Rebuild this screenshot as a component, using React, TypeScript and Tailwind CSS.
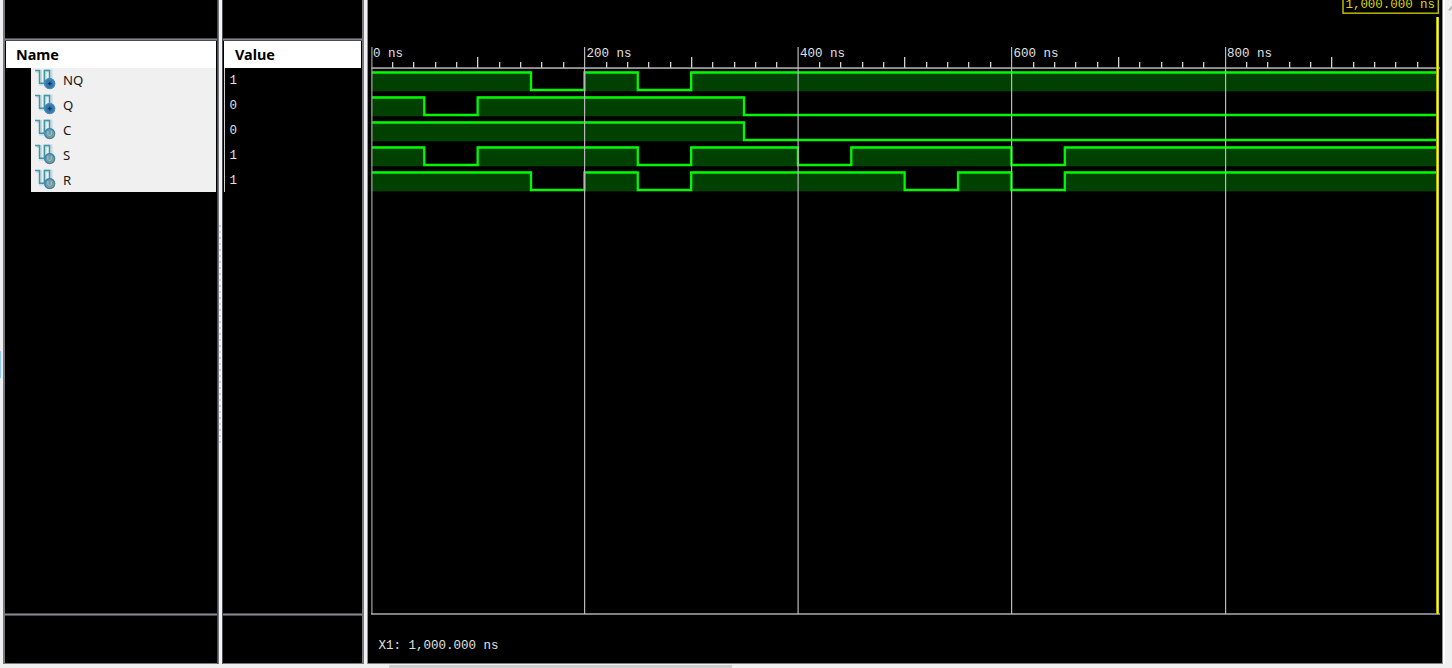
const PX_PER_NS = 1.0675;
const X0 = 370.9;
const x = (ns: number) => X0 + ns * PX_PER_NS;

type Signal = { name: string; value: string; output?: boolean; edges: number[] };

// Every signal starts high and toggles at each listed time (ns).
const signals: Signal[] = [
  { name: 'NQ', value: '1', output: true, edges: [150, 200, 250, 300] },
  { name: 'Q', value: '0', output: true, edges: [50, 100, 349.5] },
  { name: 'C', value: '0', edges: [349.5] },
  { name: 'S', value: '1', edges: [50, 100, 250, 300, 400, 450, 600, 650] },
  { name: 'R', value: '1', edges: [150, 200, 250, 300, 500, 550, 600, 650] },
];

function SignalIcon({ output }: { output?: boolean }) {
  return (
    <svg width="22" height="23" viewBox="0 0 22 23" className="shrink-0">
      <path d="M1.5 2.5h4V15h4.5V2h6v9" fill="none" stroke="#a9cfe2" strokeWidth="3" opacity=".6" />
      <path d="M0 1.6h4.5v12.7H9.4V1.6h5.1v9" fill="none" stroke="#3f98a3" strokeWidth="1.5" />
      <circle cx="14.7" cy="14.6" r="5.6" fill={output ? '#3477ad' : '#6a9cae'} />
      <circle cx="14.7" cy="14.6" r="4.9" fill="none" stroke={output ? '#4a8cc0' : '#3b80b4'} strokeWidth="1.2" />
      {output ? (
        <path d="M12.9 14.6h3.8M14.8 12.7v3.8" stroke="#12365e" strokeWidth="1.3" />
      ) : (
        <g fill="none">
          <path d="M15.2 18.1c2-.5 3.2-1.9 3.2-3.8" stroke="#8b9c65" strokeWidth="1.8" />
          <path d="M12.9 12.2V15c0 2 3.4 2 3.4 0v-2.8" stroke="#a9c8cf" strokeWidth="1" />
        </g>
      )}
    </svg>
  );
}

function Wave({ edges, top }: { edges: number[]; top: number }) {
  const hi = top + 1.5;
  const lo = top + 19;
  let level = true;
  let start = 0;
  let path = `M372 ${hi}`;
  const fills: [number, number][] = [];
  edges.forEach((t) => {
    if (level) fills.push([start, t]);
    path += `H${x(t)}V${level ? lo : hi}`;
    level = !level;
    start = t;
  });
  if (level) fills.push([start, 998]);
  path += `H${x(998)}`;
  return (
    <g>
      {fills.map(([a, b]) => (
        <rect key={a} x={x(a)} y={top} width={x(b) - x(a)} height={20.3} fill="#004000" />
      ))}
      <path d={path} fill="none" stroke="#00f800" strokeWidth="2.3" />
    </g>
  );
}

function WaveChart() {
  const ticks = Array.from({ length: 49 }, (_, i) => (i + 1) * 20);
  return (
    <svg width="1074" height="663" viewBox="368 0 1074 663" className="block" fontFamily="'Liberation Mono', monospace" fontSize="12.5">
      {ticks.map((t) =>
        t % 200 === 0 ? null : (
          <rect key={t} x={Math.round(x(t) - 0.2)} y={t % 100 === 0 ? 57 : 62} width="1.3" height={t % 100 === 0 ? 11 : 6} fill="#d0d0d0" />
        ),
      )}
      <rect x="371" y="67.3" width="1069" height="1.5" fill="#b8b8b8" />
      {signals.map((s, i) => (
        <Wave key={s.name} edges={s.edges} top={71 + i * 25} />
      ))}
      <rect x="371.3" y="47" width="1.2" height="567" fill="#a0a0a0" />
      {[584, 797.5, 1011, 1225].map((gx) => (
        <rect key={gx} x={gx} y="47" width="1.2" height="567" fill="#b8b8b8" />
      ))}
      {[0, 200, 400, 600, 800].map((t) => (
        <text key={t} x={x(t) + 2} y="57" fill="#e0e0e0" textLength={t === 0 ? 30 : 45}>
          {t} ns
        </text>
      ))}
      <rect x="371" y="613.3" width="1069" height="1.4" fill="#b8b8b8" />
      <rect x="1436" y="17" width="3" height="597" fill="#b0b000" />
      <rect x="1437" y="17" width="1.4" height="597" fill="#ffff00" />
      <rect x="1343" y="-8" width="95.3" height="21.2" fill="#000" stroke="#b8b800" strokeWidth="1.5" />
      <text x="1345.5" y="8.4" fill="#d8d800" textLength="89.5">1,000.000 ns</text>
      <text x="378.5" y="649.4" fill="#e0e0e0" textLength="120">X1: 1,000.000 ns</text>
    </svg>
  );
}

function Header({ title }: { title: string }) {
  return <div className="flex h-[27px] shrink-0 items-center bg-white text-[14.4px] font-bold text-black">{title}</div>;
}

function Divider({ grip }: { grip?: boolean }) {
  return (
    <div className="flex h-full w-[6px] shrink-0 justify-center border-x border-[#484a50] bg-[#777981]">
      <div className="flex w-[3px] flex-col items-center bg-[#f4f4f4] pt-[225px]">
        {grip && (
          <div className="flex flex-col gap-[4px]">
            {Array.from({ length: 37 }, (_, i) => (
              <div key={i} className="h-[2px] w-[2px] bg-[#d2d4d8]" />
            ))}
          </div>
        )}
      </div>
    </div>
  );
}

const rule = 'h-[3px] shrink-0 border-y border-[#494b50] bg-[#858891]';

export default function App() {
  return (
    <div className="flex h-[668px] w-[1452px] flex-col overflow-hidden bg-[#f0f0f0] font-['Noto_Sans',sans-serif]">
      <div className="flex h-[664px] shrink-0">
        <div className="flex w-[3px] shrink-0 flex-col bg-[#f0f0f0] pt-[351px]">
          <div className="h-[27px] w-[1.3px] bg-[#8cc8ff]" />
        </div>
        <div className="w-[2px] shrink-0 bg-[#777981]" />
        <div className="flex w-[212px] shrink-0 flex-col border-b border-[#777981] bg-black">
          <div className="h-[38px] shrink-0" />
          <div className={rule} />
          <div className="flex shrink-0 flex-col px-px">
            <div className="flex flex-col bg-white pl-[10px]">
              <Header title="Name" />
            </div>
            <div className="ml-[25px] flex h-[124px] flex-col bg-[#f0f0f0]">
              {signals.map((s) => (
                <div key={s.name} className="flex h-[25px] shrink-0 items-center pl-1 text-[13.2px] text-[#181818]">
                  <SignalIcon output={s.output} />
                  <span className="ml-1.5">{s.name}</span>
                </div>
              ))}
            </div>
          </div>
          <div className="flex-1" />
          <div className={rule} />
          <div className="h-[47px] shrink-0" />
        </div>
        <Divider grip />
        <div className="flex w-[139px] shrink-0 flex-col border-b border-[#777981] bg-black">
          <div className="h-[38px] shrink-0" />
          <div className={rule} />
          <div className="mr-px ml-px flex flex-col bg-white pl-[11px]">
            <Header title="Value" />
          </div>
          <div className="ml-px flex h-[124px] flex-col border-l border-[#d0d0d0] font-['Liberation_Mono',monospace] text-[12.5px] text-[#e0e0e0]">
            {signals.map((s) => (
              <div key={s.name} className="flex h-[25px] shrink-0 items-center pl-[4.5px] pt-[2px]">{s.value}</div>
            ))}
          </div>
          <div className="flex-1" />
          <div className={rule} />
          <div className="h-[47px] shrink-0" />
        </div>
        <div className="flex w-[6px] shrink-0 border-l-2 border-r border-l-[#777981] border-r-[#909094] bg-[#f0f0f0]" />
        <div className="w-[1074px] shrink-0 border-b border-[#808080] bg-black">
          <WaveChart />
        </div>
        <div className="flex flex-1 border-l border-[#909090] bg-[#f0f0f0]">
          <div className="w-[2px] bg-white" />
          <svg width="7" height="14" viewBox="0 0 7 14">
            <path d="M4 10.5L8 6" stroke="#b8b8b8" strokeWidth="2" />
          </svg>
        </div>
      </div>
      <div className="flex h-1 pl-[389px] pt-px">
        <div className="h-[3px] w-[343px] bg-[#cdcdcd]" />
      </div>
    </div>
  );
}
